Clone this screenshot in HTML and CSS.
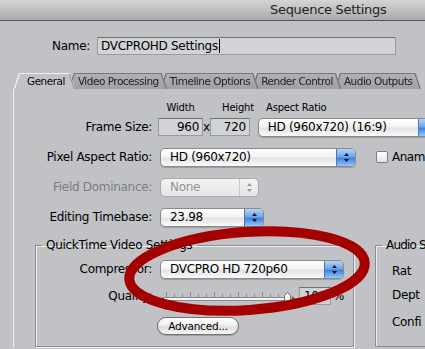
FILE: index.html
```html
<!DOCTYPE html>
<html lang="en">
<head>
  <meta charset="UTF-8">
  <title>Sequence Settings</title>
  <link rel="stylesheet" href="styles.css">
</head>
<body>
  <div class="titlebar"><span class="title">Sequence Settings</span></div>

  <div class="name-row">
    <span class="name-label">Name:</span>
    <div class="textfield name-field">DVCPROHD Settings<span class="caret"></span></div>
  </div>

  <div class="tabs">
    <div class="tab active"><div class="tab-face">General</div></div>
    <div class="tab"><div class="tab-face">Video Processing</div></div>
    <div class="tab"><div class="tab-face">Timeline Options</div></div>
    <div class="tab"><div class="tab-face">Render Control</div></div>
    <div class="tab"><div class="tab-face">Audio Outputs</div></div>
  </div>

  <div class="panel">
    <div class="head-row">
      <span class="head w-width">Width</span>
      <span class="head w-x"></span>
      <span class="head w-height">Height</span>
      <span class="head w-aspect">Aspect Ratio</span>
    </div>

    <div class="row">
      <span class="label">Frame Size:</span>
      <div class="textfield num w-width">960</div>
      <span class="times">x</span>
      <div class="textfield num w-height">720</div>
      <div class="popup pop-aspect">
        <span class="popup-text">HD (960x720) (16:9)</span>
        <span class="arrows"><svg width="7" height="11" viewBox="0 0 7 11"><path d="M3.5 1 L6 4 L1 4 Z M1 7 L6 7 L3.5 10 Z" fill="#111"/></svg></span>
      </div>
    </div>

    <div class="row">
      <span class="label">Pixel Aspect Ratio:</span>
      <div class="popup pop-pixel">
        <span class="popup-text">HD (960x720)</span>
        <span class="arrows"><svg width="7" height="11" viewBox="0 0 7 11"><path d="M3.5 1 L6 4 L1 4 Z M1 7 L6 7 L3.5 10 Z" fill="#111"/></svg></span>
      </div>
      <span class="checkbox"></span>
      <span class="check-label">Anam</span>
    </div>

    <div class="row">
      <span class="label disabled">Field Dominance:</span>
      <div class="popup pop-field off">
        <span class="popup-text">None</span>
        <span class="arrows"><svg width="7" height="11" viewBox="0 0 7 11"><path d="M3.5 1 L6 4 L1 4 Z M1 7 L6 7 L3.5 10 Z" fill="#9a9a9a"/></svg></span>
      </div>
    </div>

    <div class="row">
      <span class="label">Editing Timebase:</span>
      <div class="popup pop-time">
        <span class="popup-text">23.98</span>
        <span class="arrows"><svg width="7" height="11" viewBox="0 0 7 11"><path d="M3.5 1 L6 4 L1 4 Z M1 7 L6 7 L3.5 10 Z" fill="#111"/></svg></span>
      </div>
    </div>

    <div class="groups">
      <fieldset class="group qt">
        <legend>QuickTime Video Settings</legend>
        <div class="grow">
          <span class="glabel">Compressor:</span>
          <div class="popup pop-comp">
            <span class="popup-text">DVCPRO HD 720p60</span>
            <span class="arrows"><svg width="7" height="11" viewBox="0 0 7 11"><path d="M3.5 1 L6 4 L1 4 Z M1 7 L6 7 L3.5 10 Z" fill="#111"/></svg></span>
          </div>
        </div>
        <div class="grow quality">
          <span class="glabel">Quality:</span>
          <svg class="slider" width="136" height="14" viewBox="0 0 136 14">
            <path d="M1 9.5 L3 8 L3 11 Z" fill="#666"/>
            <rect x="3.5" y="8.5" width="122" height="3" fill="#f4f4f4" stroke="#8a8a8a"/>
            <g stroke="#8a8a8a" stroke-width="1">
              <path d="M6.5 3 V8 M14.5 5 V8 M22.5 5 V8 M30.5 3 V8 M38.5 5 V8 M46.5 5 V8 M54.5 3 V8 M62.5 5 V8 M70.5 5 V8 M78.5 3 V8 M86.5 5 V8 M94.5 5 V8 M102.5 3 V8 M110.5 5 V8 M118.5 5 V8"/>
            </g>
            <path d="M124.5 13.5 V6.5 L127.5 3.5 L130.5 6.5 V13.5 Z" fill="#f2f2f2" stroke="#6f6f6f"/>
            <path d="M132 7 L135 9.5 L132 12 Z" fill="#555"/>
          </svg>
          <div class="textfield num pct-field">100</div>
          <span class="pct">%</span>
        </div>
        <div class="grow">
          <button class="advanced">Advanced...</button>
        </div>
      </fieldset>

      <fieldset class="group audio">
        <legend>Audio S</legend>
        <div class="arow first">Rat</div>
        <div class="arow second">Dept</div>
        <div class="arow third">Confi</div>
      </fieldset>
    </div>
  </div>

  <svg class="mark" width="425" height="349" viewBox="0 0 425 349">
    <ellipse cx="247" cy="271" rx="118" ry="39" fill="none" stroke="#a40000" stroke-width="10" transform="rotate(-4 247 271)"/>
  </svg>
</body>
</html>
```

FILE: styles.css
```css
body {
  margin: 0;
  width: 425px;
  height: 349px;
  overflow: hidden;
  position: relative;
  background-color: #c1c2c5;
  font-family: "DejaVu Sans", sans-serif;
  font-size: 12px;
  letter-spacing: -0.3px;
  color: #000;
}

.titlebar {
  height: 20px;
  border-bottom: 1px solid #555;
  background: linear-gradient(#d4d4d4, #aaaaaa);
  white-space: nowrap;
}
.title {
  display: inline-block;
  padding-left: 270px;
  line-height: 20px;
  font-size: 13px;
  color: #1e1e1e;
}

.name-row {
  display: flex;
  align-items: center;
  margin-top: 16px;
  height: 18px;
}
.name-label {
  width: 90px;
  text-align: right;
  margin-right: 7px;
}
.textfield {
  box-sizing: border-box;
  height: 18px;
  line-height: 16px;
  background-color: #d2d3d6;
  border: 1px solid #9a9b9e;
  border-top-color: #6f7073;
  padding: 0 3px;
  white-space: nowrap;
}
.name-field {
  width: 299px;
}
.caret {
  display: inline-block;
  width: 1px;
  height: 14px;
  margin-left: 1px;
  vertical-align: -3px;
  background-color: #000;
}

.tabs {
  display: flex;
  margin-top: 19px;
  padding-left: 15px;
  height: 15px;
}
.tab {
  position: relative;
  flex-shrink: 0;
  margin-right: -4px;
  filter: drop-shadow(1px 0 0 #76777b) drop-shadow(-1px 0 0 #76777b) drop-shadow(0 -1px 0 #76777b);
}
.tab:nth-child(1) { z-index: 5; }
.tab:nth-child(2) { z-index: 4; }
.tab:nth-child(3) { z-index: 3; }
.tab:nth-child(4) { z-index: 2; }
.tab:nth-child(5) { z-index: 1; }
.tab-face {
  height: 15px;
  line-height: 15px;
  padding: 0 7px 0 8px;
  font-size: 10.5px;
  letter-spacing: -0.5px;
  white-space: nowrap;
  color: #222;
  background: linear-gradient(#b0b1b5, #a0a1a5);
  clip-path: polygon(5px 0, calc(100% - 5px) 0, 100% 100%, 0 100%);
}
.tab.active {
  filter: drop-shadow(1px 0 0 #8a8b8e) drop-shadow(-1px 0 0 #f0f0f0) drop-shadow(0 -1px 0 #f0f0f0);
}
.tab.active .tab-face {
  padding-left: 12px;
  padding-right: 9px;
  background: #c1c2c5;
  color: #000;
}

.panel {
  margin-left: 13px;
  border-left: 1px solid #ededed;
  padding-top: 13px;
  height: 246px;
}

.head-row {
  display: flex;
  height: 12px;
  margin-bottom: 4px;
  padding-left: 144px;
  font-size: 10px;
  line-height: 12px;
  letter-spacing: -0.2px;
}
.head {
  text-align: center;
}
.w-width { width: 45px; }
.w-x { width: 15px; }
.w-height { width: 40px; }
.w-aspect {
  margin-left: 8px;
  text-align: left;
}

.row {
  display: flex;
  align-items: center;
  height: 18px;
  margin-bottom: 12px;
  white-space: nowrap;
}
.label {
  width: 138px;
  margin-right: 6px;
  text-align: right;
  flex-shrink: 0;
}
.label.disabled {
  color: #7c7d80;
}
.num {
  text-align: right;
  flex-shrink: 0;
}
.times {
  width: 15px;
  text-align: center;
}

.popup {
  box-sizing: border-box;
  display: flex;
  height: 19px;
  border: 1px solid #8a8a8a;
  border-radius: 5px;
  background: linear-gradient(#ffffff, #f3f3f3 45%, #e4e4e4 55%, #fafafa);
  box-shadow: 0 1px 1px rgba(0, 0, 0, 0.2);
  margin-left: 2px;
  flex-shrink: 0;
  overflow: hidden;
}
.popup-text {
  flex: 1;
  line-height: 17px;
  padding-left: 9px;
  white-space: nowrap;
}
.arrows {
  width: 18px;
  display: flex;
  align-items: center;
  justify-content: center;
  border-left: 1px solid #4f78b4;
  background: linear-gradient(#b4d2f7, #6fa6ea 45%, #3f83df 55%, #94c6f8);
}
.popup.off {
  border-color: #aaaaaa;
  background: linear-gradient(#f3f3f3, #e6e6e6);
  box-shadow: none;
  color: #8f9093;
}
.popup.off .arrows {
  background: none;
  border-left-color: #c9c9c9;
}
.pop-aspect { width: 180px; margin-left: 8px; }
.pop-pixel { width: 196px; }
.pop-field { width: 99px; }
.pop-time { width: 104px; }
.pop-comp { width: 184px; }

.checkbox {
  box-sizing: border-box;
  flex-shrink: 0;
  width: 12px;
  height: 12px;
  margin-left: 20px;
  border: 1px solid #7d7d7d;
  border-radius: 2px;
  background: linear-gradient(#ffffff, #e4e4e4);
}
.check-label {
  margin-left: 4px;
  letter-spacing: -0.5px;
}

.groups {
  display: flex;
  margin-top: 12px;
  padding-left: 21px;
}
.group {
  margin: 0;
  padding: 8px 0 11px 0;
  border: 1px solid #8c8d90;
  box-shadow: 1px 1px 0 #efefef, inset 1px 1px 0 #efefef;
  flex-shrink: 0;
}
.group legend {
  margin-left: 6px;
  padding: 0 4px;
  font-size: 12px;
  white-space: nowrap;
}
.qt {
  width: 319px;
  box-sizing: border-box;
}
.audio {
  width: 50px;
  margin-left: 21px;
  padding-top: 10px;
  border-right: none;
  box-shadow: inset 1px 1px 0 #efefef;
}
.audio legend {
  padding: 0 0 0 4px;
  letter-spacing: -0.8px;
}

.grow {
  display: flex;
  align-items: center;
  height: 18px;
  white-space: nowrap;
}
.grow + .grow {
  margin-top: 9px;
}
.grow + .grow + .grow {
  margin-top: 12px;
}
.glabel {
  width: 116px;
  margin-right: 6px;
  text-align: right;
}
.slider {
  margin-left: 2px;
}
.pct-field {
  width: 32px;
  margin-left: 3px;
  padding-right: 4px;
}
.pct {
  margin-left: 2px;
}

.advanced {
  box-sizing: border-box;
  height: 18px;
  width: 82px;
  margin-left: 121px;
  padding: 0;
  border: 1px solid #707070;
  border-radius: 9px;
  background: linear-gradient(#ffffff, #f0f0f0 45%, #dedede 55%, #f6f6f6);
  box-shadow: 0 1px 1px rgba(0, 0, 0, 0.2);
  font-family: "DejaVu Sans", sans-serif;
  font-size: 10.5px;
  letter-spacing: -0.2px;
  color: #000;
}

.arow {
  height: 18px;
  line-height: 18px;
  padding-left: 16px;
  white-space: nowrap;
}
.arow.second { margin-top: 6px; }
.arow.third { margin-top: 9px; }

.mark {
  position: absolute;
  left: 0;
  top: 0;
  pointer-events: none;
}
```
